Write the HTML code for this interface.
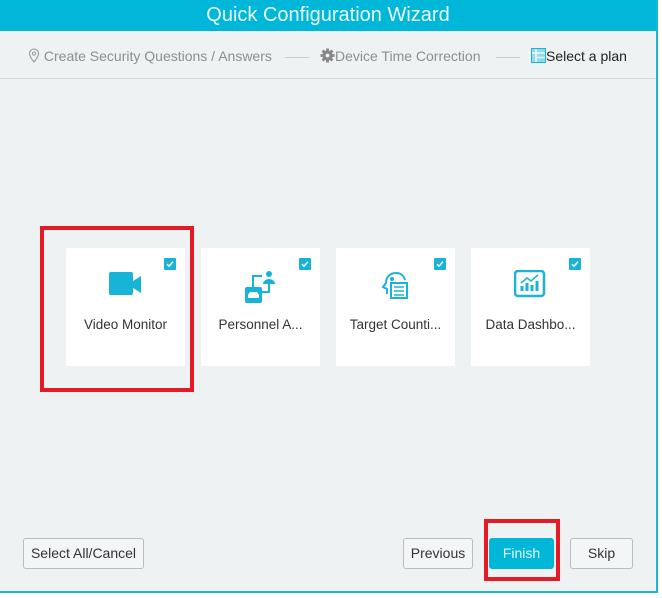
<!DOCTYPE html>
<html><head><style>
*{box-sizing:border-box;margin:0;padding:0}
body{width:662px;height:598px;background:#fff;font-family:"Liberation Sans",sans-serif;position:relative;overflow:hidden}
.dlg{position:absolute;left:0;top:0;width:658px;height:593px;background:#eef2f3;border-right:2px solid #1ab8d0;border-bottom:2px solid #1ab8d0}
.hdr{position:absolute;left:0;top:0;width:656px;height:31px;background:#00b7d9;color:#e8fbff;font-size:20px;text-align:center;line-height:31px}
.steps{position:absolute;left:0;top:31px;width:656px;height:48px;border-bottom:1px solid #d2d8da;font-size:14px;color:#8a8f93}
.steps span{position:absolute;top:17px;white-space:nowrap}
.ln{position:absolute;top:26px;height:1px;background:#c8cdd0;width:24px}
.card{position:absolute;top:248px;width:119px;height:118px;background:#fff}
.card .t{position:absolute;top:69px;left:0;width:100%;text-align:center;font-size:13.5px;color:#333}
.card .ck{position:absolute;right:9px;top:10px;width:12px;height:12px;background:#18b4d8;border-radius:1px}
.card .ck svg{position:absolute;left:0;top:0}
.card svg.i{position:absolute;left:43px;top:22px}
.red{position:absolute;border:4px solid #e21b24}
.btn{position:absolute;top:538px;height:31px;border:1px solid #b8bdc0;border-radius:3px;background:#f3f5f6;font-size:14px;color:#333;text-align:center;line-height:29px}
</style></head><body>
<div class="dlg">
<div class="hdr">Quick Configuration Wizard</div>
<div class="steps">
<span style="left:28px"><svg width="12" height="15" viewBox="0 0 12 15" style="vertical-align:-2px"><path d="M6 1a4.5 4.5 0 0 1 4.5 4.5C10.5 9 6 14 6 14S1.5 9 1.5 5.5A4.5 4.5 0 0 1 6 1z" fill="none" stroke="#999" stroke-width="1.1"/><circle cx="6" cy="5.5" r="1.6" fill="none" stroke="#999"/></svg> Create Security Questions / Answers</span>
<div class="ln" style="left:285px"></div>
<span style="left:320px"><svg width="15" height="15" viewBox="0 0 16 16" style="vertical-align:-2px"><circle cx="8" cy="8" r="5.5" fill="#888"/><g stroke="#888" stroke-width="3"><path d="M8 0.5v15M0.5 8h15M2.7 2.7l10.6 10.6M13.3 2.7L2.7 13.3"/></g><circle cx="8" cy="8" r="2" fill="#eef2f3"/></svg>Device Time Correction</span>
<div class="ln" style="left:496px"></div>
<span style="left:531px;color:#222"><svg width="15" height="15" viewBox="0 0 15 15" style="vertical-align:-2px"><rect x="0.5" y="0.5" width="14" height="14" fill="#8fdbe8" stroke="#1ab4d6"/><path d="M5 1v13M1 5h13M5 9.5h9" stroke="#fff" stroke-width="1.3"/></svg>Select a plan</span>
</div>
<div class="card" style="left:66px"><div class="ck"><svg width="12" height="12" viewBox="0 0 12 12"><path d="M3 6.2l2 2 4-4.4" fill="none" stroke="#fff" stroke-width="1.5"/></svg></div>
<svg class="i" width="34" height="28" viewBox="0 0 34 28"><rect x="0" y="2" width="24" height="23" rx="2" fill="#18b4d8"/><path d="M24 11l8-5v17l-8-5z" fill="#18b4d8"/></svg>
<div class="t">Video Monitor</div></div>
<div class="card" style="left:201px"><div class="ck"><svg width="12" height="12" viewBox="0 0 12 12"><path d="M3 6.2l2 2 4-4.4" fill="none" stroke="#fff" stroke-width="1.5"/></svg></div>
<svg class="i" width="34" height="34" viewBox="0 0 34 34"><path d="M9 17V6h9M25 10v12h-9" fill="none" stroke="#18b4d8" stroke-width="2"/><circle cx="25" cy="4" r="3" fill="#18b4d8"/><path d="M19 14a6 5 0 0 1 12 0z" fill="#18b4d8"/><rect x="1" y="17" width="17" height="16" rx="2" fill="#18b4d8"/><path d="M4 28v-3l2-3h7l2 3v3z" fill="#fff"/></svg>
<div class="t">Personnel A...</div></div>
<div class="card" style="left:336px"><div class="ck"><svg width="12" height="12" viewBox="0 0 12 12"><path d="M3 6.2l2 2 4-4.4" fill="none" stroke="#fff" stroke-width="1.5"/></svg></div>
<svg class="i" width="30" height="30" viewBox="0 0 30 30"><path d="M8 24v-5l-4-2 3-4c0-6 4-10 10-10 5 0 8 3 9 7" fill="none" stroke="#18b4d8" stroke-width="2"/><circle cx="13" cy="9" r="2" fill="#18b4d8"/><rect x="12" y="13" width="16" height="15" fill="#fff" stroke="#18b4d8" stroke-width="2"/><path d="M15 17h10M15 21h10M15 25h10" stroke="#18b4d8" stroke-width="1.5"/></svg>
<div class="t">Target Counti...</div></div>
<div class="card" style="left:471px"><div class="ck"><svg width="12" height="12" viewBox="0 0 12 12"><path d="M3 6.2l2 2 4-4.4" fill="none" stroke="#fff" stroke-width="1.5"/></svg></div>
<svg class="i" width="32" height="28" viewBox="0 0 32 28"><rect x="1" y="1" width="29" height="25" rx="3" fill="none" stroke="#18b4d8" stroke-width="2.5"/><path d="M8 21v-5M13 21v-8M18 21v-6M23 21v-10" stroke="#18b4d8" stroke-width="3"/><path d="M7 13l6-5 4 3 7-6" fill="none" stroke="#18b4d8" stroke-width="1.5"/></svg>
<div class="t">Data Dashbo...</div></div>
<div class="red" style="left:40px;top:226px;width:154px;height:166px"></div>
<div class="btn" style="left:23px;width:121px">Select All/Cancel</div>
<div class="btn" style="left:403px;width:70px">Previous</div>
<div class="btn" style="left:489px;width:65px;background:#00b7d9;border-color:#00b7d9;color:#e0f8ff">Finish</div>
<div class="btn" style="left:570px;width:63px">Skip</div>
<div class="red" style="left:484px;top:519px;width:76px;height:62px"></div>
</div>
</body></html>
